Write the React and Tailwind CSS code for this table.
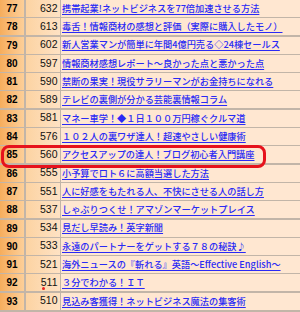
const rows = [
  [77, 632, "携帯起業!ネットビジネスを77倍加速させる方法"],
  [78, 613, "毒舌！情報商材の感想と評価（実際に購入したモノ）"],
  [79, 602, "新人営業マンが簡単に年間4億円売る◇24棟セールス"],
  [80, 597, "情報商材感想レポート〜良かった点と悪かった点"],
  [81, 590, "禁断の果実！現役サラリーマンがお金持ちになれる"],
  [82, 589, "テレビの裏側が分かる芸能裏情報コラム"],
  [83, 581, "マネー車学！◆１日１００万円稼ぐクルマ道"],
  [84, 576, "１０２人の裏ワザ達人！超速やさしい健康術"],
  [85, 560, "アクセスアップの達人！ブログ初心者入門講座"],
  [86, 555, "小予算でロト６に高額当選した方法"],
  [87, 551, "人に好感をもたれる人、不快にさせる人の話し方"],
  [88, 537, "しゃぶりつくせ！アマゾンマーケットプレイス"],
  [89, 534, "見だし早読み！英字新聞"],
  [90, 533, "永遠のパートナーをゲットする７８の秘訣♪"],
  [91, 521, "海外ニュースの『斬れる』英語〜Effective English〜"],
  [92, 511, "３分でわかる！ＩＴ"],
  [93, 510, "見込み客獲得！ネットビジネス魔法の集客術"],
];

export default function App() {
  return (
    <div className="relative w-[300px] h-[312px] overflow-hidden bg-[#c2b5a8]">
      <div className="flex flex-col gap-[1.3px]">
        {rows.map(([rank, count, title]) => (
          <div key={rank} className="grid grid-cols-[24px_34px_1fr] gap-x-[1.5px] h-[17px]">
            <div className="flex items-center justify-center bg-gradient-to-r from-[#f6ad5c] to-[#fdcf98] font-['Liberation_Sans',sans-serif] font-bold text-[10px] text-black">
              {rank}
            </div>
            <div className="flex items-center justify-end pr-[2px] bg-gradient-to-r from-[#fcd3a2] to-[#fee2c4] font-['Liberation_Sans',sans-serif] text-[10.5px] text-[#111]">
              {count}
            </div>
            <div className="flex items-center pl-[1px] bg-[#ffe7d1] whitespace-nowrap overflow-hidden">
              <a href="#" className="text-[9.2px] leading-none font-medium text-[#2a2af5] underline underline-offset-[1.5px] font-['Noto_Sans_CJK_JP',sans-serif]">
                {title}
              </a>
            </div>
          </div>
        ))}
      </div>
      <div className="absolute left-[1px] top-[145px] w-[265px] h-[23px] border-[3px] border-[#e6121c] rounded-[8px]" />
      <div className="absolute left-[42px] top-[287px] w-[3px] h-[3px] rounded-full bg-[#ee2020]" />
    </div>
  );
}
